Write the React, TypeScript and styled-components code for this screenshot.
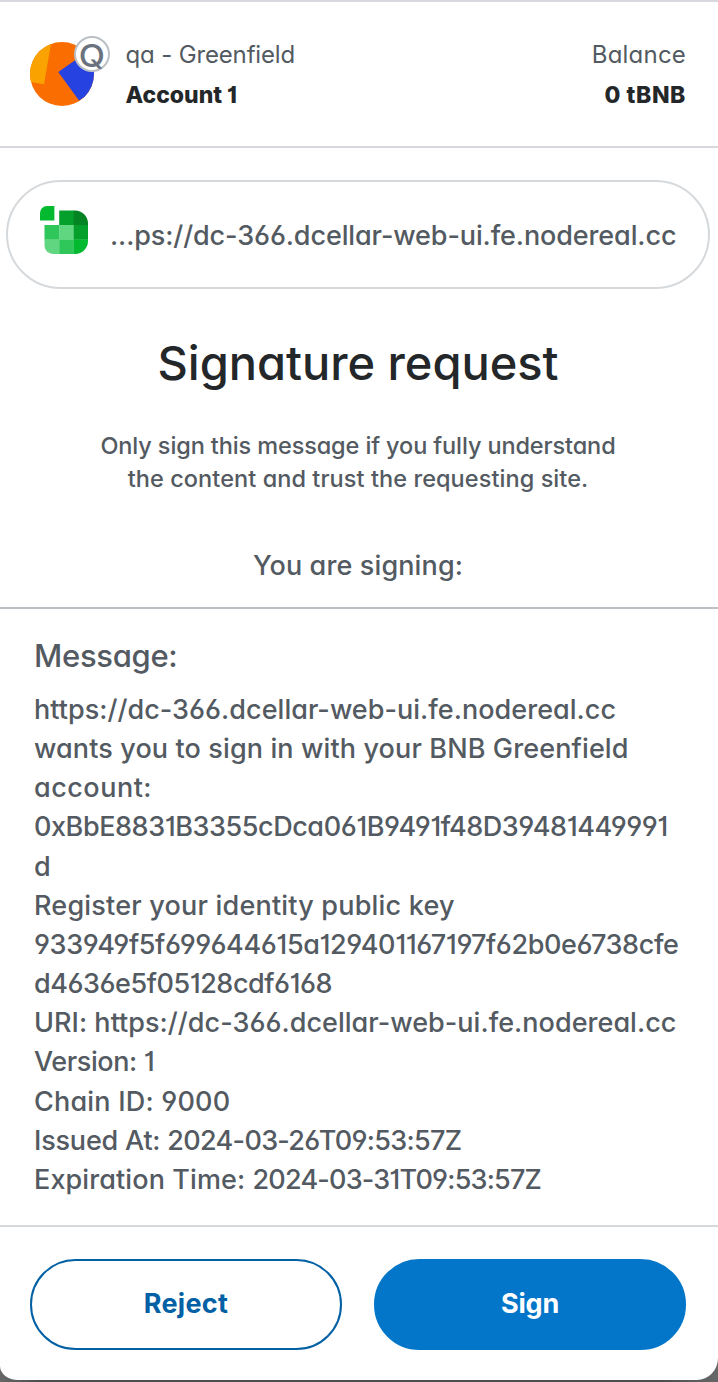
import React from "react";
import styled, { createGlobalStyle } from "styled-components";

const color = {
  text: "#535a61",
  strong: "#24272a",
  line: "#d6d9dc",
  headerLine: "#d9d8de",
  divider: "#bbc0c5",
  primary: "#0376c9",
  primaryDark: "#0260a4",
};

const GlobalStyle = createGlobalStyle`
  *, *::before, *::after { box-sizing: border-box; }
  body {
    margin: 0;
    background: #57585a;
    color: ${color.text};
    font-family: Inter, "Liberation Sans", sans-serif;
    font-feature-settings: "cv11", "cv03", "cv04", "cv01", "calt" 0;
  }
`;

const Backdrop = styled.div`
  height: 1382px;
  overflow: hidden;
  background: linear-gradient(90deg, #666769 0, #4b4c4e 40px, #4b4c4e 660px, #666769 100%);
`;

const Popup = styled.main`
  display: flex;
  flex-direction: column;
  height: 1380px;
  background: #fff;
  border-bottom-left-radius: 18px 14px;
  border-bottom-right-radius: 21px 22px;
`;

const Header = styled.header`
  display: flex;
  align-items: flex-start;
  height: 148px;
  padding: 33px 32px 0 30px;
  border-top: 2px solid ${color.headerLine};
  border-bottom: 2px solid ${color.headerLine};
`;

const Identity = styled.div`
  position: relative;
  width: 64px;
  height: 64px;
  margin-top: 7px;
`;

const AvatarArt = styled.svg`
  display: block;
  width: 64px;
  height: 64px;
`;

const NetworkBadge = styled.span`
  position: absolute;
  top: -6px;
  left: 44px;
  display: flex;
  align-items: center;
  justify-content: center;
  width: 36px;
  height: 36px;
  border: 2px solid ${color.divider};
  border-radius: 50%;
  background: #fff;
  color: #6a737d;
  font-size: 31px;
  font-weight: 500;
  line-height: 36px;
`;

const BadgeLetter = styled.span`
  position: relative;
  top: 2px;
  transform: scaleX(1.1);
`;

const HeaderText = styled.div<{ $end?: boolean }>`
  display: flex;
  flex-direction: column;
  align-items: ${(p) => (p.$end ? "flex-end" : "flex-start")};
  margin-left: ${(p) => (p.$end ? "auto" : "31.5px")};
`;

const HeaderLabel = styled.span<{ $track: number }>`
  font-size: 24px;
  line-height: 40px;
  letter-spacing: ${(p) => p.$track}px;
`;

const HeaderValue = styled.span<{ $track: number }>`
  color: ${color.strong};
  font-size: 23px;
  font-weight: 800;
  line-height: 40px;
  letter-spacing: ${(p) => p.$track}px;
`;

const SitePill = styled.div`
  display: flex;
  align-items: center;
  height: 109px;
  margin: 32px 8px 0 6px;
  padding: 0 0 10px 32px;
  border: 2px solid ${color.line};
  border-radius: 55px;
`;

const SiteLogo = styled.svg`
  width: 48px;
  height: 48px;
`;

const SiteOrigin = styled.span`
  margin: 12px 0 0 22px;
  font-size: 27px;
  font-weight: 500;
  line-height: 40px;
  letter-spacing: -0.114px;
  white-space: nowrap;
`;

const Intro = styled.section`
  display: flex;
  flex-direction: column;
  align-items: center;
  height: 320px;
  padding: 44px 2px 0 0;
  border-bottom: 2px solid ${color.divider};
  text-align: center;
`;

const Title = styled.h1`
  margin: 0;
  color: ${color.strong};
  font-size: 47px;
  font-weight: 500;
  line-height: 60px;
  letter-spacing: -0.03px;
`;

const Warning = styled.p`
  display: flex;
  flex-direction: column;
  align-items: center;
  margin: 36px 0 0;
`;

const WarningLine = styled.span<{ $track: number }>`
  font-size: 23.5px;
  font-weight: 500;
  line-height: 33px;
  letter-spacing: ${(p) => p.$track}px;
  white-space: nowrap;
`;

const SigningLabel = styled.p`
  margin: 51px 0 0;
  font-size: 27px;
  font-weight: 500;
  line-height: 40px;
  letter-spacing: 0.123px;
`;

const Message = styled.section`
  height: 616px;
  padding: 27px 32px 0 34px;
`;

const MessageTitle = styled.h2`
  margin: 0 0 14px;
  font-size: 31px;
  font-weight: 500;
  line-height: 40px;
  letter-spacing: -0.3px;
`;

const MessageLine = styled.div`
  height: 39.17px;
  font-size: 27px;
  font-weight: 500;
  line-height: 39.17px;
  white-space: pre;
`;

const Tracked = styled.span<{ $track: number }>`
  letter-spacing: ${(p) => p.$track}px;
`;

const Footer = styled.footer`
  display: grid;
  grid-template-columns: 1fr 1fr;
  gap: 32px;
  padding: 32px 32px 0 30px;
  border-top: 2px solid ${color.line};
`;

const ActionButton = styled.button<{ $primary?: boolean; $track: number }>`
  height: 91px;
  padding: 0 0 2px;
  border: 2px solid ${(p) => (p.$primary ? color.primary : color.primaryDark)};
  border-radius: 46px;
  background: ${(p) => (p.$primary ? color.primary : "#fff")};
  color: ${(p) => (p.$primary ? "#fff" : color.primaryDark)};
  font-family: inherit;
  font-feature-settings: inherit;
  font-size: 27px;
  font-weight: 700;
  line-height: 40px;
  letter-spacing: ${(p) => p.$track}px;
`;

type Part = { text: string; track: number };

const messageLines: Part[][] = [
  [{ text: "https://dc-366.dcellar-web-ui.fe.nodereal.cc", track: 0.03 }],
  [{ text: "wants you to sign in with your BNB Greenfield", track: 0.12 }],
  [{ text: "account:", track: 0.5 }],
  [{ text: "0xBbE8831B3355cDca061B9491f48D39481449991", track: -0.43 }],
  [{ text: "d", track: 0 }],
  [{ text: "Register your identity public key", track: 0.2 }],
  [{ text: "933949f5f699644615a129401167197f62b0e6738cfe", track: -0.4 }],
  [{ text: "d4636e5f05128cdf6168", track: -0.46 }],
  [{ text: "URI: https://dc-366.dcellar-web-ui.fe.nodereal.cc", track: 0.03 }],
  [{ text: "Version: 1", track: -0.4 }],
  [{ text: "Chain ID: 9000", track: 0.2 }],
  [
    { text: "Issued At: ", track: -0.2 },
    { text: "2024-03-26T09:53:57Z", track: -0.69 },
  ],
  [
    { text: "Expiration Time: ", track: 0.1 },
    { text: "2024-03-31T09:53:57Z", track: -0.8 },
  ],
];

function Avatar() {
  return (
    <AvatarArt viewBox="0 0 64 64">
      <clipPath id="avatar-disc">
        <circle cx="32" cy="32" r="32" />
      </clipPath>
      <g clipPath="url(#avatar-disc)">
        <rect width="64" height="64" fill="#f96d01" />
        <path d="M-10 38 L14 42.2 L22 -4 L-10 -4 Z" fill="#faa300" />
        <path d="M28.3 30 L62 6.5 L80 40 L49 58.5 Z" fill="#2642e1" />
      </g>
    </AvatarArt>
  );
}

function CellLogo() {
  return (
    <SiteLogo viewBox="0 0 48 48">
      <path d="M7 0H14.4V14.4H0V7A7 7 0 0 1 7 0Z" fill="#02b92f" />
      <path d="M19.2 4.5H34V19.2H19.2Z" fill="#059f2b" />
      <path d="M33.6 4.5H35A13 13 0 0 1 48 17.5V19.2H33.6Z" fill="#058423" />
      <path d="M4.5 19H19.4V33.8H4.5Z" fill="#2fc75a" />
      <path d="M19.2 19H33.8V33.8H19.2Z" fill="#60d680" />
      <path d="M33.6 19H48V33.8H33.6Z" fill="#059f2b" />
      <path d="M4.5 33.6H19.4V48H13A8.5 8.5 0 0 1 4.5 39.5Z" fill="#60d680" />
      <path d="M19.2 33.6H33.8V48H19.2Z" fill="#2fc75a" />
      <path d="M33.6 33.6H48V35A13 13 0 0 1 35 48H33.6Z" fill="#02b92f" />
    </SiteLogo>
  );
}

export default function App() {
  return (
    <Backdrop>
      <GlobalStyle />
      <Popup>
        <Header>
          <Identity>
            <Avatar />
            <NetworkBadge>
              <BadgeLetter>Q</BadgeLetter>
            </NetworkBadge>
          </Identity>
          <HeaderText>
            <HeaderLabel $track={-0.15}>qa - Greenfield</HeaderLabel>
            <HeaderValue $track={0}>Account 1</HeaderValue>
          </HeaderText>
          <HeaderText $end>
            <HeaderLabel $track={0.2}>Balance</HeaderLabel>
            <HeaderValue $track={0.6}>0 tBNB</HeaderValue>
          </HeaderText>
        </Header>

        <SitePill>
          <CellLogo />
          <SiteOrigin>...ps://dc-366.dcellar-web-ui.fe.nodereal.cc</SiteOrigin>
        </SitePill>

        <Intro>
          <Title>Signature request</Title>
          <Warning>
            <WarningLine $track={-0.12}>Only sign this message if you fully understand</WarningLine>
            <WarningLine $track={0.069}>the content and trust the requesting site.</WarningLine>
          </Warning>
          <SigningLabel>You are signing:</SigningLabel>
        </Intro>

        <Message>
          <MessageTitle>Message:</MessageTitle>
          {messageLines.map((parts) => (
            <MessageLine key={parts[0].text}>
              {parts.map((part) => (
                <Tracked key={part.text} $track={part.track}>
                  {part.text}
                </Tracked>
              ))}
            </MessageLine>
          ))}
        </Message>

        <Footer>
          <ActionButton $track={0.3}>Reject</ActionButton>
          <ActionButton $primary $track={-0.2}>
            Sign
          </ActionButton>
        </Footer>
      </Popup>
    </Backdrop>
  );
}
